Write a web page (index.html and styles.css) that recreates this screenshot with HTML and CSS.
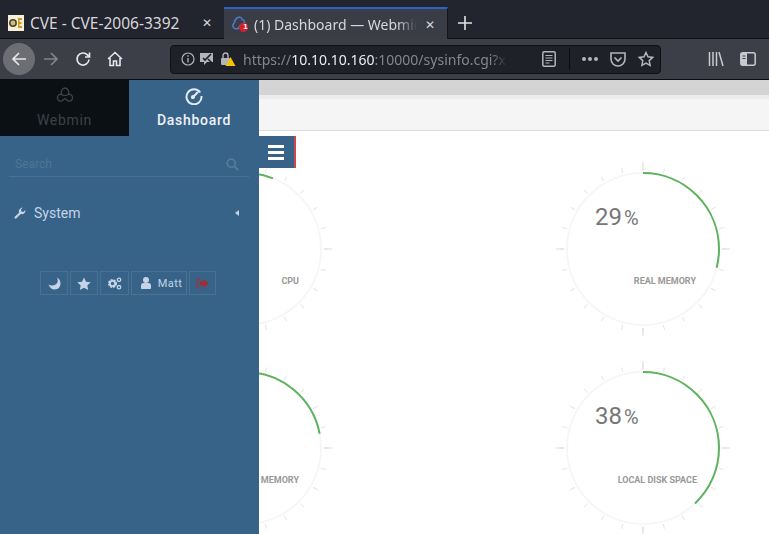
FILE: index.html
```html
<!DOCTYPE html>
<html lang="en">
  <head>
    <meta charset="UTF-8" />
    <title>Dashboard — Webmin</title>
    <link rel="stylesheet" href="styles.css">
  </head>
  <body>
    <!-- browser tabs -->
    <div class="tabbar">
      <div class="tab">
        <svg class="favicon" width="16" height="16" viewBox="0 0 16 16">
          <rect width="16" height="16" fill="#f6efd9"/>
          <circle cx="5" cy="8" r="3.200" fill="#cdbb80" stroke="#4a4528" stroke-width="1.500"/>
          <path d="M10 3h4v2h-2.500v2h2v2h-2v2h2.500v2h-4z" fill="#d09a20"/>
        </svg>
        <span class="tab-title">CVE - CVE-2006-3392</span>
        <span class="tab-close">✕</span>
      </div>
      <div class="tab tab-active">
        <svg class="favicon" width="16" height="16" viewBox="0 0 16 16">
          <path d="M6 1.500c2-1 4 0 4 2 2 0 3 2 2 4-1 1-2 1-3 1l-3 4c-2 1-4.500 0-5-2-.5-2 .5-3 1.500-4 0-2 1.500-4 3.500-5z" fill="none" stroke="#4d78c8" stroke-width="1.600"/>
          <circle cx="11.500" cy="11.500" r="4.500" fill="#d0202a"/>
        </svg>
        <span class="tab-badge">1</span>
        <span class="tab-title tab-fade">(1) Dashboard — Webmin</span>
        <span class="tab-close">✕</span>
      </div>
      <span class="newtab">
        <svg width="16" height="16" viewBox="0 0 16 16"><path d="M8 1v14M1 8h14" stroke="#e4e4e6" stroke-width="1.600"/></svg>
      </span>
    </div>

    <!-- browser toolbar -->
    <div class="toolbar">
      <span class="backbtn">
        <svg width="18" height="18" viewBox="0 0 18 18"><path d="M16 9H3M9 3L3 9l6 6" fill="none" stroke="#e6e6e8" stroke-width="1.700"/></svg>
      </span>
      <span class="navbtn navbtn-off">
        <svg width="18" height="18" viewBox="0 0 18 18"><path d="M2 9h13M9 3l6 6-6 6" fill="none" stroke="#84858a" stroke-width="1.700"/></svg>
      </span>
      <span class="navbtn">
        <svg width="16" height="16" viewBox="0 0 16 16"><path d="M14 8.500a6 6 0 1 1-1.600-4.600L14 5.500M14.500 1.500v4.500H10" fill="none" stroke="#e6e6e8" stroke-width="1.700"/></svg>
      </span>
      <span class="navbtn">
        <svg width="16" height="16" viewBox="0 0 16 16"><path d="M1 8l7-6.500L15 8M3 7v7.500h3.500V10h3v4.500H13V7" fill="none" stroke="#e6e6e8" stroke-width="1.600"/></svg>
      </span>

      <div class="urlbar">
        <svg class="url-icon" width="14" height="14" viewBox="0 0 14 14"><circle cx="7" cy="7" r="6" fill="none" stroke="#b4b5b9" stroke-width="1.200"/><path d="M7 6v4.500M7 3.300v1.500" stroke="#b4b5b9" stroke-width="1.300"/></svg>
        <svg class="url-icon url-perm" width="16" height="16" viewBox="0 0 16 16"><path d="M1 2h13v9H8l-3 3v-3H1z" fill="#b4b5b9"/><path d="M4 7l2 2 6-6" fill="none" stroke="#1e2028" stroke-width="1.600"/><path d="M9 8l5 5" stroke="#1e2028" stroke-width="1.500"/></svg>
        <svg class="url-icon" width="15" height="16" viewBox="0 0 15 16"><rect x="0" y="7" width="9" height="7" rx="1" fill="#b4b5b9"/><path d="M2 7V4.500a2.500 2.500 0 0 1 5 0V7" fill="none" stroke="#b4b5b9" stroke-width="1.400"/><path d="M9.500 6l5 9h-10z" fill="#f5c400"/></svg>
        <span class="url-text"><span class="url-dim">https://</span><span class="url-host">10.10.10.160</span><span class="url-dim">:10000/sysinfo.cgi?xnavigation=1</span></span>
        <svg class="url-reader" width="14" height="16" viewBox="0 0 14 16"><rect x=".8" y=".8" width="12.400" height="14.400" rx="1.500" fill="none" stroke="#b4b5b9" stroke-width="1.500"/><path d="M3.500 4.500h7M3.500 7h7M3.500 9.500h7M3.500 12h4" stroke="#b4b5b9"/></svg>
        <span class="url-sep"></span>
        <span class="url-dots"><i></i><i></i><i></i></span>
        <svg class="url-pocket" width="16" height="15" viewBox="0 0 16 15"><path d="M1 1h14v6a7 7 0 0 1-14 0z" fill="none" stroke="#b4b5b9" stroke-width="1.600"/><path d="M4.500 5.500L8 9l3.500-3.500" fill="none" stroke="#b4b5b9" stroke-width="1.700"/></svg>
        <svg class="url-star" width="16" height="16" viewBox="0 0 16 16"><path d="M8 1.500l2 4.300 4.700.6-3.500 3.200.9 4.700L8 12l-4.100 2.300.9-4.700L1.300 6.400 6 5.800z" fill="none" stroke="#b4b5b9" stroke-width="1.500"/></svg>
      </div>

      <svg class="tool-library" width="16" height="14" viewBox="0 0 16 14"><path d="M1.500 0v14M5 0v14M8.500 0v14M11 0l4 14" stroke="#c9cacd" stroke-width="1.500"/></svg>
      <svg class="tool-sidebar" width="16" height="14" viewBox="0 0 16 14"><rect x=".8" y=".8" width="14.400" height="12.400" rx="2" fill="none" stroke="#c9cacd" stroke-width="1.500"/><rect x="1" y="1" width="6" height="12" fill="#c9cacd"/><path d="M2.500 4h3M2.500 6.500h3" stroke="#3d3f48"/></svg>
    </div>

    <div class="page">
      <!-- webmin left menu -->
      <div class="sidebar">
        <div class="side-tabs">
          <div class="side-tab">
            <svg width="18" height="16" viewBox="0 0 18 16"><path d="M6 7.500C4 5.500 6 1 9 1s5 4.500 3 6.500c2.500-.7 5 1 4.500 3.800-.5 3-4 3.700-5.500 1.700L9 11.500 7 13c-1.500 2-5 1.300-5.500-1.700C1 8.500 3.500 6.800 6 7.500z" fill="none" stroke="#3f444a" stroke-width="1.300"/><path d="M7 8.500h4" stroke="#3f444a"/></svg>
            <span>Webmin</span>
          </div>
          <div class="side-tab side-tab-active">
            <svg width="18" height="18" viewBox="0 0 18 18"><path d="M15.200 5.500A7.500 7.500 0 1 0 16.500 9" fill="none" stroke="#e4e9ef" stroke-width="2"/><path d="M6.500 11.500l6.500-6.500" stroke="#e4e9ef" stroke-width="2.200"/><circle cx="8" cy="10" r="2" fill="#e4e9ef"/></svg>
            <span>Dashboard</span>
          </div>
        </div>
        <div class="search">
          <span>Search</span>
          <svg width="13" height="13" viewBox="0 0 13 13"><circle cx="5.200" cy="5.200" r="4" fill="none" stroke="#56799c" stroke-width="1.800"/><path d="M8.200 8.200l4 4" stroke="#56799c" stroke-width="2"/></svg>
        </div>
        <div class="menu-item">
          <svg width="12" height="12" viewBox="0 0 12 12"><path d="M.5 10L5 5.800C4.400 3.500 5.600.8 8.800.5L7 2.600l.4 1.900 1.800.5L11.400 3c.4 3-2.200 4.800-4.600 4.100L2.200 11.500c-.9.500-2.200-.6-1.700-1.500z" fill="#c5d3e6"/></svg>
          <span class="menu-label">System</span>
          <i class="menu-caret"></i>
        </div>
        <div class="side-btns">
          <span class="side-btn btn-moon">
            <svg width="13" height="13" viewBox="0 0 13 13"><path d="M9 .5c2 4 0 8-5 8-1 0-2-.2-3.500-1 1 3 3.500 5 6 5 4 0 6-3 6-6 0-3-1.500-5-3.500-6z" fill="#c5d3e6"/></svg>
          </span>
          <span class="side-btn btn-star">
            <svg width="14" height="13" viewBox="0 0 14 13"><path d="M7 .5l2 4.200 4.700.6-3.400 3.200.9 4.500L7 10.800l-4.200 2.200.9-4.500L.3 5.300 5 4.700z" fill="#c5d3e6"/></svg>
          </span>
          <span class="side-btn btn-cogs">
            <svg width="15" height="13" viewBox="0 0 15 13"><circle cx="5.500" cy="6.500" r="3.200" fill="none" stroke="#c5d3e6" stroke-width="2.600" stroke-dasharray="1.800 .8"/><circle cx="5.500" cy="6.500" r="2.600" fill="none" stroke="#c5d3e6" stroke-width="1.800"/><circle cx="12" cy="2.800" r="1.700" fill="none" stroke="#c5d3e6" stroke-width="1.300"/><circle cx="12" cy="10.200" r="1.700" fill="none" stroke="#c5d3e6" stroke-width="1.300"/></svg>
          </span>
          <span class="side-btn btn-user">
            <svg width="10" height="12" viewBox="0 0 10 12"><circle cx="5" cy="3" r="3" fill="#c5d3e6"/><path d="M0 11V8.500C0 7 1 6 2.500 6h5C9 6 10 7 10 8.500V11c0 .6-.4 1-1 1H1c-.6 0-1-.4-1-1z" fill="#c5d3e6"/></svg>
            <span>Matt</span>
          </span>
          <span class="side-btn btn-out">
            <svg width="13" height="11" viewBox="0 0 13 11"><path d="M4.500 1H2C1 1 .8 1.500.8 2.500v6c0 1 .2 1.500 1.200 1.500h2.500" fill="none" stroke="#8f3a48" stroke-width="1.300"/><path d="M3.500 3.500h4V1l5 4.500-5 4.500V7.500h-4z" fill="#a82a30"/></svg>
          </span>
        </div>
      </div>

      <!-- right frame -->
      <div class="main">
        <div class="topbar"><div class="topbar-strip"></div><div class="topbar-gap"></div><div class="topbar-head"></div></div>
        <div class="menubtn"><i></i><i></i><i></i></div>
        <div class="gauges">
          <svg class="gauge" width="180" height="180" viewBox="0 0 180 180">
            <circle class="g-track" cx="90" cy="90" r="76"/>
            <circle class="g-minor" cx="90" cy="90" r="81" pathLength="24" stroke-dasharray=".05 .95" stroke-dashoffset=".025"/>
            <circle class="g-major" cx="90" cy="90" r="83" pathLength="4" stroke-dasharray=".008 .992" stroke-dashoffset=".004"/>
            <circle class="g-arc" cx="90" cy="90" r="76" pathLength="100" stroke-dasharray="6 100" transform="rotate(-90 90 90)"/>
            <text class="g-num" x="42" y="66">6<tspan class="g-pct" dx="2">%</tspan></text>
            <text class="g-label" x="144" y="125" text-anchor="end">CPU</text>
          </svg>
          <svg class="gauge" width="180" height="180" viewBox="0 0 180 180">
            <circle class="g-track" cx="90" cy="90" r="76"/>
            <circle class="g-minor" cx="90" cy="90" r="81" pathLength="24" stroke-dasharray=".05 .95" stroke-dashoffset=".025"/>
            <circle class="g-major" cx="90" cy="90" r="83" pathLength="4" stroke-dasharray=".008 .992" stroke-dashoffset=".004"/>
            <circle class="g-arc" cx="90" cy="90" r="76" pathLength="100" stroke-dasharray="29 100" transform="rotate(-90 90 90)"/>
            <text class="g-num" x="42" y="66">29<tspan class="g-pct" dx="2">%</tspan></text>
            <text class="g-label" x="143" y="125" text-anchor="end">REAL MEMORY</text>
          </svg>
          <svg class="gauge" width="180" height="180" viewBox="0 0 180 180">
            <circle class="g-track" cx="90" cy="90" r="76"/>
            <circle class="g-minor" cx="90" cy="90" r="81" pathLength="24" stroke-dasharray=".05 .95" stroke-dashoffset=".025"/>
            <circle class="g-major" cx="90" cy="90" r="83" pathLength="4" stroke-dasharray=".008 .992" stroke-dashoffset=".004"/>
            <circle class="g-arc" cx="90" cy="90" r="76" pathLength="100" stroke-dasharray="22 100" transform="rotate(-90 90 90)"/>
            <text class="g-num" x="42" y="66">22<tspan class="g-pct" dx="2">%</tspan></text>
            <text class="g-label" x="144" y="125" text-anchor="end">VIRTUAL MEMORY</text>
          </svg>
          <svg class="gauge" width="180" height="180" viewBox="0 0 180 180">
            <circle class="g-track" cx="90" cy="90" r="76"/>
            <circle class="g-minor" cx="90" cy="90" r="81" pathLength="24" stroke-dasharray=".05 .95" stroke-dashoffset=".025"/>
            <circle class="g-major" cx="90" cy="90" r="83" pathLength="4" stroke-dasharray=".008 .992" stroke-dashoffset=".004"/>
            <circle class="g-arc" cx="90" cy="90" r="76" pathLength="100" stroke-dasharray="38 100" transform="rotate(-90 90 90)"/>
            <text class="g-num" x="42" y="66">38<tspan class="g-pct" dx="2">%</tspan></text>
            <text class="g-label" x="144" y="125" text-anchor="end">LOCAL DISK SPACE</text>
          </svg>
        </div>
      </div>
    </div>
  </body>
</html>
```

FILE: styles.css
```css
html, body {
  height: 100%;
}
body {
  margin: 0;
  display: flex;
  flex-direction: column;
  overflow: hidden;
  background-color: white;
  font-family: "Noto Sans", sans-serif;
}

/* browser tabs */
.tabbar {
  display: flex;
  height: 39px;
  padding-top: 7px;
  box-sizing: border-box;
  background-color: #22242e;
  border-bottom: 1px solid #0f1014;
}
.tab {
  display: flex;
  align-items: center;
  position: relative;
  width: 224px;
  box-sizing: border-box;
  padding: 0 12px 0 8px;
  color: #d7d7db;
  font-size: 15.500px;
}
.tab-active {
  height: 32px;
  background-color: #3a3c46;
  border-top: 2px solid #2f62c8;
  border-right: 1px solid #15161b;
  font-size: 14px;
}
.tab-title {
  margin-left: 6px;
  flex: 1;
  white-space: nowrap;
  overflow: hidden;
}
.tab-fade {
  -webkit-mask-image: linear-gradient(to right, black 88%, transparent 100%);
  mask-image: linear-gradient(to right, black 88%, transparent 100%);
}
.tab-close {
  margin-left: 8px;
  font-size: 12px;
  color: #d7d7db;
}
.tab-badge {
  position: absolute;
  left: 17px;
  top: 13px;
  width: 9px;
  text-align: center;
  color: white;
  font: bold 8px "Liberation Sans", sans-serif;
}
.favicon {
  flex: none;
}
.newtab {
  display: flex;
  align-items: center;
  margin-left: 9px;
}

/* browser toolbar */
.toolbar {
  display: flex;
  align-items: center;
  height: 41px;
  box-sizing: border-box;
  padding-left: 3px;
  background-color: #3d3f48;
  border-bottom: 1px solid #0d0e11;
}
.backbtn {
  display: flex;
  align-items: center;
  justify-content: center;
  width: 32px;
  height: 32px;
  border-radius: 50%;
  background-color: #6d6e74;
}
.navbtn {
  display: flex;
  align-items: center;
  justify-content: center;
  width: 32px;
  height: 32px;
}
.urlbar {
  display: flex;
  align-items: center;
  width: 491px;
  height: 29px;
  box-sizing: border-box;
  margin-left: 39px;
  padding: 0 6px 0 10px;
  background-color: #1f2129;
  border: 1px solid #0f1014;
  border-radius: 4px;
}
.url-icon {
  flex: none;
  margin-right: 4px;
}
.url-perm {
  margin-right: 6px;
}
.url-text {
  flex: none;
  width: 264px;
  margin-left: 3px;
  overflow: hidden;
  white-space: nowrap;
  font-size: 14px;
  -webkit-mask-image: linear-gradient(to right, black 94%, transparent 100%);
  mask-image: linear-gradient(to right, black 94%, transparent 100%);
}
.url-dim {
  color: #85868c;
}
.url-host {
  color: #ececee;
}
.url-reader {
  flex: none;
  margin-left: 35px;
}
.url-sep {
  width: 1px;
  height: 22px;
  margin-left: 13px;
  background-color: #0c0d10;
}
.url-dots {
  display: flex;
  gap: 2px;
  margin-left: 12px;
}
.url-dots i {
  width: 4px;
  height: 4px;
  border-radius: 50%;
  background-color: #b4b5b9;
}
.url-pocket {
  flex: none;
  margin-left: 12px;
}
.url-star {
  flex: none;
  margin-left: 12px;
}
.tool-library {
  margin-left: 47px;
}
.tool-sidebar {
  margin-left: 16px;
}

/* page under the browser chrome */
.page {
  position: relative;
  flex: 1;
  overflow: hidden;
}
.sidebar {
  position: absolute;
  left: 0;
  top: 0;
  bottom: 0;
  z-index: 2;
  width: 259px;
  background-color: #386388;
  font-family: Roboto, sans-serif;
}
.side-tabs {
  display: flex;
  height: 56px;
}
.side-tab {
  display: flex;
  flex-direction: column;
  align-items: center;
  width: 129px;
  padding-top: 7px;
  box-sizing: border-box;
  background-color: #0b1014;
  color: #3d4247;
  font-size: 14px;
  letter-spacing: .7px;
}
.side-tab span {
  margin-top: 9px;
}
.side-tab-active {
  width: 130px;
  background-color: #386388;
  color: #eef1f5;
  font-weight: 500;
}
.side-tab-active span {
  margin-top: 7px;
}
.search {
  display: flex;
  align-items: center;
  justify-content: space-between;
  height: 41px;
  box-sizing: border-box;
  margin: 0 10px 0 9px;
  padding: 16px 10px 0 6px;
  border-bottom: 1px solid #4a7296;
  color: #507496;
  font-size: 12px;
}
.menu-item {
  display: flex;
  align-items: center;
  height: 20px;
  margin-top: 26px;
  padding: 0 20px 0 14px;
  color: #c5d3e6;
  font-size: 14px;
}
.menu-label {
  flex: 1;
  margin-left: 8px;
}
.menu-caret {
  width: 0;
  height: 0;
  border-top: 3.500px solid transparent;
  border-bottom: 3.500px solid transparent;
  border-right: 4px solid #c5d3e6;
}
.side-btns {
  display: flex;
  gap: 2px;
  margin-top: 48px;
  padding-left: 40px;
}
.side-btn {
  display: flex;
  align-items: center;
  justify-content: center;
  gap: 7px;
  height: 24px;
  box-sizing: border-box;
  border: 1px solid #4a7296;
  color: #c5d3e6;
  font-size: 11px;
  letter-spacing: .4px;
}
.btn-moon, .btn-star {
  width: 28px;
}
.btn-cogs {
  width: 29px;
}
.btn-user {
  width: 56px;
  padding-left: 5px;
}
.btn-out {
  width: 27px;
}

/* right frame */
.main {
  position: relative;
}
.topbar {
  height: 51px;
  box-sizing: border-box;
  background-color: #f5f5f5;
  border-bottom: 1px solid #dcdcdc;
}
.topbar-strip {
  height: 15px;
  background-color: #d4d4d4;
}
.topbar-gap {
  height: 4px;
  background-color: #ececec;
}
.menubtn {
  position: absolute;
  left: 259px;
  top: 56px;
  z-index: 1;
  display: flex;
  flex-direction: column;
  justify-content: center;
  gap: 3px;
  width: 37px;
  height: 32px;
  box-sizing: border-box;
  padding: 0 10px 0 9px;
  background-color: #386388;
  border-right: 2px solid #d0454c;
}
.menubtn i {
  height: 3px;
  background-color: white;
}
.gauges {
  display: grid;
  grid-template-columns: 398px 180px;
  grid-auto-rows: 199px;
  margin-top: 28px;
  padding-left: 155px;
}
.gauge {
  display: block;
  font-family: Roboto, sans-serif;
}
.gauge circle {
  fill: none;
}
.g-track {
  stroke: #f6f6f6;
  stroke-width: 2;
}
.g-minor {
  stroke: #e6e6e6;
  stroke-width: 5;
}
.g-major {
  stroke: #dddddd;
  stroke-width: 8;
}
.g-arc {
  stroke: #5cb35f;
  stroke-width: 2;
}
.g-num {
  fill: #777;
  font-size: 24px;
}
.g-pct {
  font-size: 20px;
}
.g-label {
  fill: #999;
  font-size: 9px;
  font-weight: bold;
}
```
